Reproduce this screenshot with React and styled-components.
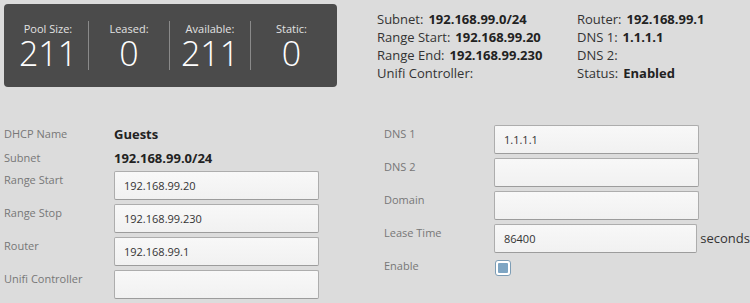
import React from 'react';
import styled, { createGlobalStyle } from 'styled-components';

const GlobalStyle = createGlobalStyle`
  html, body {
    margin: 0;
    padding: 0;
    background: #dcdcdc;
    font-family: "Open Sans", "DejaVu Sans", sans-serif;
    overflow: hidden;
  }
`;

const Page = styled.div`
  width: 750px;
  height: 303px;
  padding: 4px 0 0 4px;
  box-sizing: border-box;
`;

const Header = styled.div`
  display: flex;
  align-items: center;
`;

const StatBox = styled.div`
  width: 333px;
  height: 83px;
  box-sizing: border-box;
  padding: 0 5px 0 4px;
  background: #4b4b4b;
  border-radius: 4px;
  display: flex;
  align-items: center;
`;

const Stat = styled.div`
  width: 81px;
  height: 49px;
  display: flex;
  flex-direction: column;
  align-items: center;
  border-right: ${(p) => (p.$last ? 'none' : '1px solid #8a8a8a')};
  box-sizing: border-box;
`;

const StatLabel = styled.div`
  font-size: 11px;
  line-height: 16px;
  color: #e2e2e2;
`;

const StatValue = styled.div`
  font-size: 34px;
  line-height: 33px;
  font-weight: 300;
  color: #ffffff;
`;

const Info = styled.div`
  margin-left: 40px;
  display: grid;
  grid-template-columns: 200px auto;
  grid-auto-rows: 18px;
  font-size: 13px;
  color: #333;
  line-height: 18px;
`;

const InfoItem = styled.div`
  white-space: nowrap;
`;

const InfoValue = styled.b`
  margin-left: 5px;
  font-weight: 700;
  color: #222;
`;

const Form = styled.div`
  display: flex;
  margin-top: 35px;
`;

const Column = styled.div`
  width: ${(p) => p.$width}px;
  padding-top: ${(p) => p.$top || 0}px;
`;

const StaticRow = styled.div`
  display: flex;
  align-items: center;
  height: 24px;
  margin-bottom: ${(p) => (p.$gap ? 1 : 0)}px;
`;

const Row = styled.div`
  display: flex;
  align-items: flex-start;
  margin-bottom: 4px;
`;

const Label = styled.div`
  width: 110px;
  flex: none;
  font-size: 11px;
  line-height: 16px;
  padding-top: 1px;
  color: #777;
`;

const StaticLabel = styled(Label)`
  padding-top: 0;
`;

const StaticValue = styled.div`
  font-size: 13px;
  font-weight: 700;
  color: #222;
`;

const Input = styled.input`
  width: 205px;
  height: 29px;
  box-sizing: border-box;
  margin: 0;
  padding: 0 9px;
  border: 1px solid #adadad;
  border-bottom-color: #9c9c9c;
  border-radius: 2px;
  background: linear-gradient(#f8f8f8, #f1f1f1);
  font-family: "Open Sans", "DejaVu Sans", sans-serif;
  font-size: 11px;
  color: #333;
  outline: none;
`;

const Unit = styled.span`
  margin-left: 3px;
  font-size: 13px;
  line-height: 29px;
  color: #333;
  white-space: nowrap;
`;

const Check = styled.span`
  display: block;
  width: 16px;
  height: 16px;
  box-sizing: border-box;
  margin: 3px 0 0 1px;
  border: 1px solid #7d9db5;
  border-radius: 3px;
  background: #fff;
  padding: 2px;
`;

const CheckFill = styled.span`
  display: block;
  width: 100%;
  height: 100%;
  background: #7ea5c3;
  border-radius: 1px;
`;

const stats = [
  { label: 'Pool Size:', value: 211 },
  { label: 'Leased:', value: 0 },
  { label: 'Available:', value: 211 },
  { label: 'Static:', value: 0 },
];

const info = [
  ['Subnet:', '192.168.99.0/24'],
  ['Router:', '192.168.99.1'],
  ['Range Start:', '192.168.99.20'],
  ['DNS 1:', '1.1.1.1'],
  ['Range End:', '192.168.99.230'],
  ['DNS 2:', ''],
  ['Unifi Controller:', ''],
  ['Status:', 'Enabled'],
];

export default function App() {
  return (
    <Page>
      <GlobalStyle />
      <Header>
        <StatBox>
          {stats.map((s, i) => (
            <Stat key={s.label} $last={i === stats.length - 1}>
              <StatLabel>{s.label}</StatLabel>
              <StatValue>{s.value}</StatValue>
            </Stat>
          ))}
        </StatBox>
        <Info>
          {info.map(([k, v]) => (
            <InfoItem key={k}>
              {k}
              {v && <InfoValue>{v}</InfoValue>}
            </InfoItem>
          ))}
        </Info>
      </Header>

      <Form>
        <Column $width={380}>
          <StaticRow>
            <StaticLabel>DHCP Name</StaticLabel>
            <StaticValue>Guests</StaticValue>
          </StaticRow>
          <StaticRow $gap>
            <StaticLabel>Subnet</StaticLabel>
            <StaticValue>192.168.99.0/24</StaticValue>
          </StaticRow>
          <Row>
            <Label>Range Start</Label>
            <Input defaultValue="192.168.99.20" />
          </Row>
          <Row>
            <Label>Range Stop</Label>
            <Input defaultValue="192.168.99.230" />
          </Row>
          <Row>
            <Label>Router</Label>
            <Input defaultValue="192.168.99.1" />
          </Row>
          <Row>
            <Label>Unifi Controller</Label>
            <Input defaultValue="" />
          </Row>
        </Column>
        <Column $width={366} $top={3}>
          <Row>
            <Label>DNS 1</Label>
            <Input defaultValue="1.1.1.1" />
          </Row>
          <Row>
            <Label>DNS 2</Label>
            <Input defaultValue="" />
          </Row>
          <Row>
            <Label>Domain</Label>
            <Input defaultValue="" />
          </Row>
          <Row>
            <Label>Lease Time</Label>
            <Input defaultValue="86400" />
            <Unit>seconds</Unit>
          </Row>
          <Row>
            <Label>Enable</Label>
            <Check>
              <CheckFill />
            </Check>
          </Row>
        </Column>
      </Form>
    </Page>
  );
}
